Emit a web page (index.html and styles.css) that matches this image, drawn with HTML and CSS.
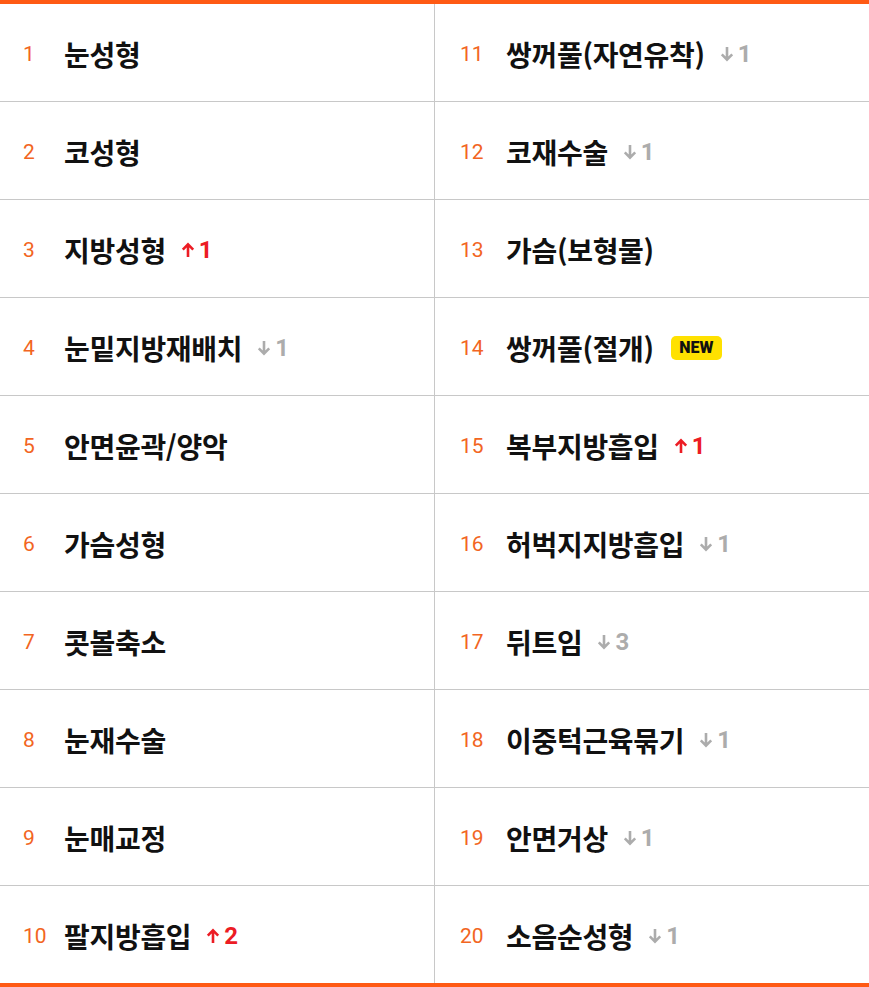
FILE: index.html
```html
<!DOCTYPE html>
<html lang="ko">
<head>
<meta charset="utf-8">
<link rel="stylesheet" href="styles.css">
</head>
<body>
<div class="board">
  <ul class="col col-left">
    <li class="row"><span class="num">1</span><span class="name">눈성형</span></li>
    <li class="row"><span class="num">2</span><span class="name">코성형</span></li>
    <li class="row"><span class="num">3</span><span class="name">지방성형</span><span class="chg up"><svg viewBox="0 0 14 16"><path d="M7 15V2.5M1.8 7.6L7 2.4l5.2 5.2"/></svg>1</span></li>
    <li class="row"><span class="num">4</span><span class="name">눈밑지방재배치</span><span class="chg down"><svg viewBox="0 0 14 16"><path d="M7 1v12.5M1.8 8.4L7 13.6l5.2-5.2"/></svg>1</span></li>
    <li class="row"><span class="num">5</span><span class="name">안면윤곽/양악</span></li>
    <li class="row"><span class="num">6</span><span class="name">가슴성형</span></li>
    <li class="row"><span class="num">7</span><span class="name">콧볼축소</span></li>
    <li class="row"><span class="num">8</span><span class="name">눈재수술</span></li>
    <li class="row"><span class="num">9</span><span class="name">눈매교정</span></li>
    <li class="row"><span class="num">10</span><span class="name">팔지방흡입</span><span class="chg up"><svg viewBox="0 0 14 16"><path d="M7 15V2.5M1.8 7.6L7 2.4l5.2 5.2"/></svg>2</span></li>
  </ul>
  <ul class="col col-right">
    <li class="row"><span class="num">11</span><span class="name">쌍꺼풀(자연유착)</span><span class="chg down"><svg viewBox="0 0 14 16"><path d="M7 1v12.5M1.8 8.4L7 13.6l5.2-5.2"/></svg>1</span></li>
    <li class="row"><span class="num">12</span><span class="name">코재수술</span><span class="chg down"><svg viewBox="0 0 14 16"><path d="M7 1v12.5M1.8 8.4L7 13.6l5.2-5.2"/></svg>1</span></li>
    <li class="row"><span class="num">13</span><span class="name">가슴(보형물)</span></li>
    <li class="row"><span class="num">14</span><span class="name">쌍꺼풀(절개)</span><span class="new">NEW</span></li>
    <li class="row"><span class="num">15</span><span class="name">복부지방흡입</span><span class="chg up"><svg viewBox="0 0 14 16"><path d="M7 15V2.5M1.8 7.6L7 2.4l5.2 5.2"/></svg>1</span></li>
    <li class="row"><span class="num">16</span><span class="name">허벅지지방흡입</span><span class="chg down"><svg viewBox="0 0 14 16"><path d="M7 1v12.5M1.8 8.4L7 13.6l5.2-5.2"/></svg>1</span></li>
    <li class="row"><span class="num">17</span><span class="name">뒤트임</span><span class="chg down"><svg viewBox="0 0 14 16"><path d="M7 1v12.5M1.8 8.4L7 13.6l5.2-5.2"/></svg>3</span></li>
    <li class="row"><span class="num">18</span><span class="name">이중턱근육묶기</span><span class="chg down"><svg viewBox="0 0 14 16"><path d="M7 1v12.5M1.8 8.4L7 13.6l5.2-5.2"/></svg>1</span></li>
    <li class="row"><span class="num">19</span><span class="name">안면거상</span><span class="chg down"><svg viewBox="0 0 14 16"><path d="M7 1v12.5M1.8 8.4L7 13.6l5.2-5.2"/></svg>1</span></li>
    <li class="row"><span class="num">20</span><span class="name">소음순성형</span><span class="chg down"><svg viewBox="0 0 14 16"><path d="M7 1v12.5M1.8 8.4L7 13.6l5.2-5.2"/></svg>1</span></li>
  </ul>
</div>
</body>
</html>
```

FILE: styles.css
```css
* { box-sizing: border-box; }
html, body { margin: 0; padding: 0; background: #fff; }
body { font-family: Roboto, "Noto Sans CJK KR", sans-serif; }

.board {
  width: 869px;
  display: grid;
  grid-template-columns: 435px 434px;
  border-top: 4px solid #ff5a14;
  border-bottom: 4px solid #ff5a14;
}
.col { list-style: none; margin: 0; padding: 0; }
.col-left { border-right: 1px solid #c8c8c8; }

.row {
  height: 98px;
  display: flex;
  align-items: center;
  border-bottom: 1px solid #c8c8c8;
}
.row:last-child { border-bottom: 0; height: 97px; }

.col-left .row { padding-left: 23px; }
.col-right .row { padding-left: 25px; }

.num {
  font-family: Roboto, sans-serif;
  font-size: 21px;
  color: #f26522;
  line-height: 1;
  padding-top: 3px;
}
.col-left .num { width: 41px; }
.col-right .num { width: 46px; }

.name {
  font-family: "Noto Sans CJK KR", sans-serif;
  font-weight: 700;
  font-size: 28px;
  color: #111;
  line-height: 1;
  letter-spacing: -0.3px;
  padding-top: 2px;
}

.chg {
  display: inline-flex;
  align-items: center;
  margin-left: 15px;
  font-family: Roboto, sans-serif;
  font-weight: 700;
  font-size: 24px;
  line-height: 1;
  padding-top: 3px;
}
.chg svg {
  width: 14px;
  height: 16px;
  margin-right: 4px;
  fill: none;
  stroke: currentColor;
  stroke-width: 2.6;
}
.chg.down { color: #acacac; }
.chg.up { color: #ec1c24; }

.new {
  margin-left: 17px;
  margin-top: 2px;
  background: #ffe100;
  border-radius: 5px;
  height: 24px;
  width: 51px;
  display: inline-flex;
  align-items: center;
  justify-content: center;
  font-family: Roboto, sans-serif;
  font-weight: 900;
  font-size: 16px;
  color: #111;
}
```
